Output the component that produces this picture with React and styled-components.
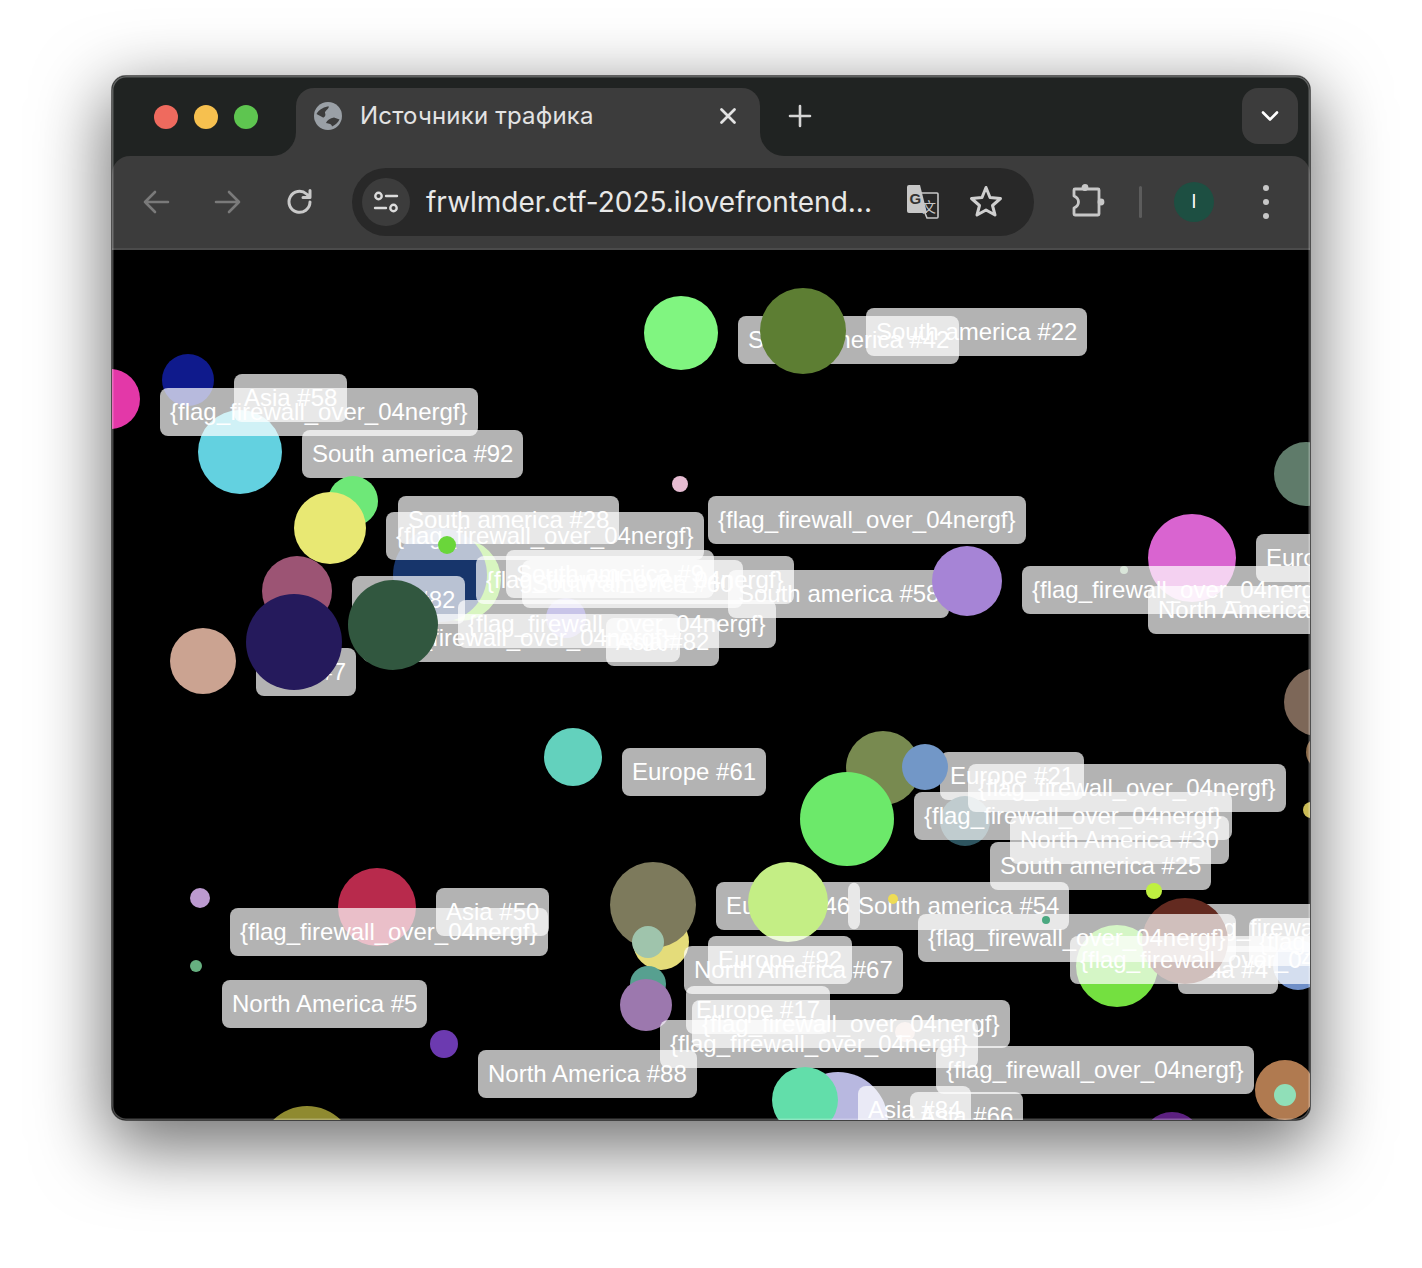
import React from "react";
import styled, { createGlobalStyle } from "styled-components";

const Global = createGlobalStyle`
  html, body { margin: 0; padding: 0; background: #fff; }
  body { width: 1422px; height: 1268px; overflow: hidden; }
  * { box-sizing: border-box; }
`;
const Page = styled.div`
  width: 1422px; height: 1268px; padding: 76px 112px 148px;
`;
const Window = styled.div`
  position: relative;
  width: 1198px; height: 1044px; border-radius: 14px; overflow: hidden;
  background: #202322; display: flex; flex-direction: column;
  box-shadow: 0 22px 70px 6px rgba(0,0,0,.56), 0 0 0 1px rgba(0,0,0,.55);
  &::after {
    content: ""; position: absolute; inset: 0; border-radius: 14px; pointer-events: none;
    box-shadow: inset 0 0 0 1.5px rgba(255,255,255,.28);
  }
`;
const TitleBar = styled.div`
  height: 80px; flex: none; display: flex; background: #3c3c3c;
`;
const Traffic = styled.div`
  width: 184px; flex: none; background: #202322; border-bottom-right-radius: 24px;
  display: flex; gap: 16px; padding: 29px 0 0 42px;
`;
const Light = styled.span`
  width: 24px; height: 24px; border-radius: 50%; background: ${p => p.$c};
`;
const TabSlot = styled.div`
  width: 464px; flex: none; background: #202322; padding-top: 12px;
`;
const Tab = styled.div`
  height: 68px; background: #3c3c3c; border-radius: 18px 18px 0 0;
  display: flex; align-items: flex-start; padding: 14px 18px 0 18px; color: #e3e3e3;
`;
const TabTitle = styled.span`
  font: 400 24px/28px Inter, sans-serif; flex: 1; margin-left: 18px; letter-spacing: .18px;
`;
const Rest = styled.div`
  flex: 1; background: #202322; border-bottom-left-radius: 24px; display: flex;
  justify-content: space-between; padding: 12px 12px 0 24px;
`;
const PlusBox = styled.div`
  width: 32px; height: 32px; margin-top: 12px; color: #d5d5d5;
`;
const ChevBox = styled.div`
  width: 56px; height: 56px; border-radius: 16px; background: #3c3c3c;
  display: flex; align-items: center; justify-content: center;
`;
const Toolbar = styled.div`
  height: 94px; flex: none; background: #3c3c3c; border-radius: 18px 18px 0 0;
  border-bottom: 2px solid #4b4b4b; display: flex; align-items: center; padding: 0 0 0 28px;
`;
const NavBtn = styled.div`
  width: 32px; height: 32px; margin-right: 40px; flex: none; color: ${p => p.$c};
`;
const Omni = styled.div`
  width: 682px; height: 68px; border-radius: 34px; background: #282828; flex: none;
  display: flex; align-items: center; padding: 0 30px 0 10px; margin-left: -4px;
`;
const Chip = styled.div`
  width: 48px; height: 48px; border-radius: 50%; background: #3c3c3c; flex: none;
  display: flex; align-items: center; justify-content: center;
`;
const Url = styled.span`
  font: 400 28px/34px Inter, sans-serif; color: #e8e8e8; margin-left: 16px; width: 448px;
  white-space: nowrap; flex: none;
`;
const OmniIcon = styled.div`
  width: 36px; height: 36px; flex: none; margin-left: ${p => p.$ml}px;
`;
const ExtBox = styled.div`
  width: 36px; height: 36px; flex: none; margin-left: 35px;
`;
const Divider = styled.div`
  width: 3px; height: 32px; background: #5c5c5c; border-radius: 2px; margin-left: 34px; flex: none;
`;
const Avatar = styled.div`
  width: 40px; height: 40px; border-radius: 50%; background: #1d4f42; color: #fff; flex: none;
  margin-left: 32px; display: flex; align-items: center; justify-content: center;
  font: 400 18px/20px Inter, sans-serif;
`;
const Dots = styled.div`
  margin-left: 49px; display: flex; flex-direction: column; gap: 8px; flex: none;
`;
const Dot = styled.span`
  width: 6px; height: 6px; border-radius: 50%; background: #c7c7c7;
`;
const Canvas = styled.div`
  position: relative; flex: 1; background: #000; overflow: hidden;
`;
const Circle = styled.div`
  position: absolute; border-radius: 50%;
  left: ${p => p.$x - p.$r - 112}px; top: ${p => p.$y - p.$r - 250}px;
  width: ${p => p.$r * 2}px; height: ${p => p.$r * 2}px; background: ${p => p.$c};
`;
const Label = styled.div`
  position: absolute; left: ${p => p.$x - 112}px; top: ${p => p.$y - 250}px;
  padding: 10px; border-radius: 8px; background: rgba(255,255,255,.7); color: #fff;
  font: 400 24px/28px "Liberation Sans", Arial, sans-serif; white-space: nowrap;
`;

const F = "{flag_firewall_over_04nergf}";
const items = [
  ["c",110,399,30,"#e338a8"],["c",188,380,26,"#0f1a8c"],["c",240,452,42,"#63d1e0"],
  ["l",234,374,"Asia #58"],["l",160,388,F],["l",302,430,"South america #92"],
  ["c",353,501,25,"#6ee878"],["c",330,528,36,"#e8e873"],["c",680,484,8,"#e6bcd2"],
  ["c",681,333,37,"#80f580"],
  ["l",738,316,"South america #42"],["c",803,331,43,"#5d7e33"],["l",866,308,"South america #22"],
  ["c",460,580,41,"#7ddd2d"],["c",440,575,47,"#17356b"],["c",566,618,20,"#483ab2"],
  ["l",398,496,"South america #28"],["l",386,512,F],["l",708,496,F],
  ["l",352,576,"Asia #82"],["l",476,556,F],["l",506,550,"South america #9"],
  ["l",522,560,"South america #60"],["l",728,570,"South america #58"],
  ["l",362,614,F],["l",458,600,F],["l",606,618,"Asia #82"],
  ["c",447,545,9,"#6ad63a"],["c",297,591,35,"#9c5474"],["l",256,648,"Asia #7"],
  ["c",294,642,48,"#251a5c"],["c",393,625,45,"#31573f"],["c",203,661,33,"#cba391"],
  ["c",967,581,35,"#a684d6"],
  ["c",1306,474,32,"#5f7b6a"],["c",1192,558,44,"#d964d0"],["c",1124,570,4,"#7fa97f"],
  ["l",1256,534,"Europe #11"],["l",1022,566,F],["l",1148,586,"North America #12"],
  ["c",1318,702,34,"#7d6758"],["c",1324,752,18,"#8a6a4a"],["c",1311,810,8,"#cabb55"],
  ["c",573,757,29,"#63d1bd"],["l",622,748,"Europe #61"],
  ["c",883,768,37,"#788a50"],["l",940,752,"Europe #21"],["c",925,767,23,"#7297c7"],
  ["c",965,821,25,"#2e5560"],["l",968,764,F],["l",914,792,F],
  ["c",847,819,47,"#6ce96a"],
  ["l",1010,816,"North America #30"],["l",990,842,"South america #25"],
  ["c",1154,891,8,"#bff040"],
  ["l",716,882,"Europe #46"],["l",848,882,"South america #54"],
  ["c",788,902,40,"#c4ee85"],["c",893,899,5,"#eedc55"],
  ["c",1117,966,41,"#74e040"],["c",1298,965,25,"#6f8fc8"],
  ["l",1180,904,F],["l",1178,946,"Asia #4"],
  ["c",1185,941,43,"#632a20"],
  ["l",918,914,F],["c",1046,920,4,"#4aa880"],
  ["l",1070,936,F],["l",1249,918,F],
  ["c",377,907,39,"#b82a4c"],["l",230,908,F],["l",436,888,"Asia #50"],
  ["c",200,898,10,"#bc9ad0"],["c",196,966,6,"#66b080"],["l",222,980,"North America #5"],
  ["c",444,1044,14,"#6c3ab0"],
  ["c",661,942,28,"#e4dc7a"],["c",653,905,43,"#7d7a5c"],["c",648,942,16,"#9fc4ac"],
  ["c",648,984,18,"#57a090"],["c",646,1005,26,"#9c78ae"],
  ["l",684,946,"North America #67"],["l",708,936,"Europe #92"],["l",686,986,"Europe #17"],
  ["c",905,1032,10,"#c88070"],
  ["l",692,1000,F],["l",660,1020,F],["l",478,1050,"North America #88"],["l",936,1046,F],
  ["c",1285,1090,30,"#b07a50"],["c",1285,1095,11,"#90dfb8"],
  ["c",838,1122,50,"#b8b8e0"],["c",805,1100,33,"#62deaa"],
  ["l",858,1086,"Asia #84"],["l",910,1092,"Asia #66"],
  ["c",307,1154,48,"#8f8a30"],["c",1172,1142,30,"#5c2080"],
];

const I = ({ children, s = 32, w = 2.6 }) => (
  <svg width={s} height={s} viewBox="0 0 32 32" fill="none" stroke="currentColor" strokeWidth={w} strokeLinecap="round" strokeLinejoin="round">{children}</svg>
);

export default function App() {
  return (
    <Page>
      <Global />
      <Window>
        <TitleBar>
          <Traffic>
            <Light $c="#ef6a5e" /><Light $c="#f6c04f" /><Light $c="#5ec550" />
          </Traffic>
          <TabSlot>
            <Tab>
              <svg width="28" height="28" viewBox="0 0 28 28" style={{ flex: "none" }}>
                <circle cx="14" cy="14" r="14" fill="#9aa0a6" />
                <path d="M15 4.5 C11 4.5 5 7 2.5 12 L9 15.5 C11 15.5 12 13 11 11 C10.5 9 14 8 15 4.5 Z" fill="#3c3c3c" />
                <path d="M12 21 C13 18 16 16.5 20 15.5 L25.5 17.5 C24 21 21 23 18 24.5 C18 22 15 21.5 12 21 Z" fill="#3c3c3c" />
              </svg>
              <TabTitle>Источники трафика</TabTitle>
              <svg width="28" height="28" viewBox="0 0 28 28" fill="none" stroke="#e3e3e3" strokeWidth="2.8" strokeLinecap="round">
                <path d="M7.5 7.5 L20.5 20.5 M20.5 7.5 L7.5 20.5" />
              </svg>
            </Tab>
          </TabSlot>
          <Rest>
            <PlusBox><I><path d="M16 6 V26 M6 16 H26" /></I></PlusBox>
            <ChevBox>
              <svg width="20" height="20" viewBox="0 0 20 20" fill="none" stroke="#fff" strokeWidth="2.6" strokeLinecap="round" strokeLinejoin="round"><path d="M3 6.5 L10 13.5 L17 6.5" /></svg>
            </ChevBox>
          </Rest>
        </TitleBar>
        <Toolbar>
          <NavBtn $c="#7a7a7a"><I><path d="M28 16 H5 M15 6 L5 16 L15 26" /></I></NavBtn>
          <NavBtn $c="#7a7a7a"><I><path d="M4 16 H27 M17 6 L27 16 L17 26" /></I></NavBtn>
          <NavBtn $c="#c9c9c9"><I w={3}><path d="M26 16 A10.5 10.5 0 1 1 22.5 8 L26 11 M26 4.5 V11.5 H19" /></I></NavBtn>
          <Omni>
            <Chip>
              <svg width="28" height="28" viewBox="0 0 28 28" fill="none" stroke="#dcdcdc" strokeWidth="2.4" strokeLinecap="round">
                <circle cx="6.5" cy="8" r="3.2" /><path d="M14 8 H25" /><path d="M3 20 H14" /><circle cx="21.5" cy="20" r="3.2" />
              </svg>
            </Chip>
            <Url>frwlmder.ctf-2025.ilovefrontend...</Url>
            <OmniIcon $ml={30}>
              <svg width="36" height="36" viewBox="0 0 36 36">
                <path d="M3 3 Q3 1 5 1 H16 L23 29 H5 Q3 29 3 27 Z" fill="#c7c7c7" />
                <text x="5.5" y="20" fontSize="15" fontWeight="700" fontFamily="Liberation Sans, sans-serif" fill="#333">G</text>
                <path d="M16 9 H33 Q34 9 34 10 V33 Q34 34 33 34 H23 L21 29" fill="none" stroke="#c7c7c7" strokeWidth="1.6" />
                <text x="18" y="28" fontSize="14" fontFamily="Noto Sans CJK SC, sans-serif" fill="#c7c7c7">文</text>
              </svg>
            </OmniIcon>
            <OmniIcon $ml={28}>
              <svg width="36" height="36" viewBox="0 0 36 36" fill="none" stroke="#cfcfcf" strokeWidth="3" strokeLinejoin="round">
                <path d="M18 3.5 L22 13.5 L32.5 14.5 L24.5 21.5 L27 31 L18 26 L9 31 L11.5 21.5 L3.5 14.5 L14 13.5 Z" />
              </svg>
            </OmniIcon>
          </Omni>
          <ExtBox>
            <svg width="36" height="36" viewBox="0 0 36 36" fill="#c7c7c7" stroke="#c7c7c7" strokeWidth="2.8" strokeLinejoin="round">
              <path fill="none" d="M6 5 H29 Q30 5 30 6 V30 Q30 31 29 31 H6 Q5 31 5 30 V24 Q9.5 22 9.5 18 Q9.5 14 5 12 V6 Q5 5 6 5 Z" />
              <circle cx="16" cy="3.5" r="2" /><circle cx="32" cy="18" r="2" />
            </svg>
          </ExtBox>
          <Divider />
          <Avatar>I</Avatar>
          <Dots><Dot /><Dot /><Dot /></Dots>
        </Toolbar>
        <Canvas>
          {items.map((it, i) =>
            it[0] === "c"
              ? <Circle key={i} $x={it[1]} $y={it[2]} $r={it[3]} $c={it[4]} />
              : <Label key={i} $x={it[1]} $y={it[2]}>{it[3]}</Label>
          )}
        </Canvas>
      </Window>
    </Page>
  );
}
